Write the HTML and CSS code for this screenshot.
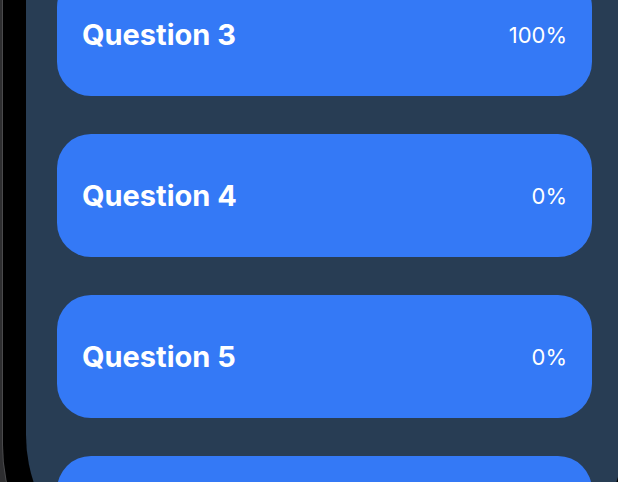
FILE: index.html
```html
<!DOCTYPE html>
<html>
<head>
<meta charset="utf-8">
<link rel="stylesheet" href="styles.css">
</head>
<body>
<div class="phone">
  <div class="screen">
    <div class="list">
      <div class="card"><span class="title">Question 3</span><span class="pct">100%</span></div>
      <div class="card"><span class="title">Question 4</span><span class="pct">0%</span></div>
      <div class="card"><span class="title">Question 5</span><span class="pct">0%</span></div>
      <div class="card"></div>
    </div>
  </div>
</div>
</body>
</html>
```
FILE: styles.css
```css
html, body {
  margin: 0;
  padding: 0;
  overflow: hidden;
  width: 618px;
  height: 482px;
  background: #2e2e30;
}
body {
  font-family: Inter, "Noto Sans", sans-serif;
}
.phone {
  margin-left: 3px;
  width: 660px;
  height: 620px;
  background: #000;
  border-radius: 0 0 175px 175px;
  padding-left: 23px;
  box-sizing: border-box;
  box-shadow: -1px 0 0 #4a4a4c;
}
.screen {
  width: 598px;
  height: 585px;
  background: #283d54;
  border-radius: 0 0 150px 150px;
  overflow: hidden;
}
.list {
  margin-top: -27px;
  padding: 0 32px 0 31px;
  display: flex;
  flex-direction: column;
  gap: 38px;
}
.card {
  height: 123px;
  background: #3479f6;
  border-radius: 34px;
  display: flex;
  align-items: center;
  justify-content: space-between;
  padding: 0 25px;
  color: #fff;
}
.title {
  font-weight: 700;
  font-size: 29px;
}
.pct {
  font-size: 22px;
  font-weight: 400;
}
```
